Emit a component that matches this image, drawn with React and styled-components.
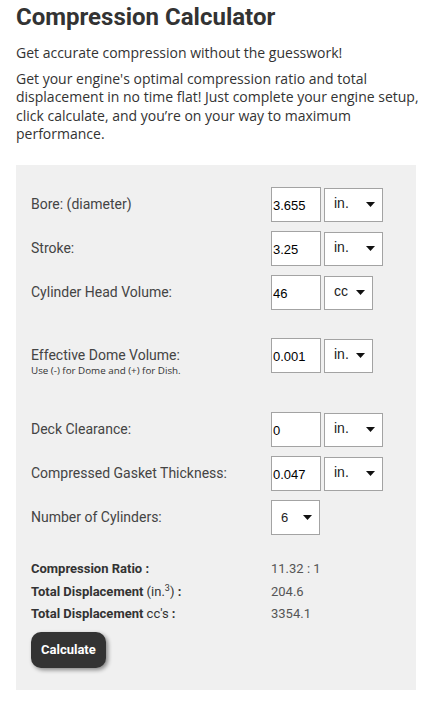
import React from "react";
import styled, { createGlobalStyle } from "styled-components";

const GlobalStyle = createGlobalStyle`
  body {
    margin: 0;
    background: #fff;
  }
`;

const Page = styled.div`
  padding: 1.5px 16px 13px;
`;

const Title = styled.h1`
  margin: 0;
  font-family: Roboto, "Liberation Sans", sans-serif;
  font-weight: 700;
  font-size: 24px;
  line-height: 30px;
  color: #333;
`;

const Intro = styled.p`
  margin: ${(p) => (p.$first ? "12px 0 8.5px" : "0")};
  font-family: "Open Sans", "DejaVu Sans", sans-serif;
  font-size: 14px;
  line-height: 18.2px;
  color: #333;
`;

const Panel = styled.div`
  width: 400px;
  box-sizing: border-box;
  margin-top: 21.7px;
  padding: 22px 15px 22.3px;
  background: #f0f0f0;
`;

const Row = styled.div`
  display: flex;
  align-items: center;
  height: 35px;
  margin-top: ${(p) => p.$gap}px;
`;

const LabelCol = styled.div`
  flex: 0 0 240px;
  display: flex;
  flex-direction: column;
`;

const Label = styled.label`
  font-family: Roboto, "Liberation Sans", sans-serif;
  font-size: 14px;
  line-height: 35px;
  color: #444;
`;

const Note = styled.span`
  margin: -7.5px 0 -4.5px;
  font-family: "Open Sans", "DejaVu Sans", sans-serif;
  font-size: 9.8px;
  line-height: 12px;
  color: #333;
`;

const Controls = styled.div`
  display: flex;
  align-items: flex-end;
  gap: 3px;
  height: 35px;
`;

const NumberInput = styled.input`
  width: 50px;
  height: 35px;
  box-sizing: border-box;
  margin: 0;
  padding: 2px 0 0 1px;
  border: 1px solid #a3a3a3;
  background: #fff;
  font-family: "Liberation Sans", Arial, sans-serif;
  font-size: 13px;
  color: #000;
  outline: none;
`;

const SelectBox = styled.div`
  width: ${(p) => p.$w}px;
  height: ${(p) => (p.$tall ? 35 : 34)}px;
  box-sizing: border-box;
  display: flex;
  align-items: center;
  justify-content: space-between;
  padding: 0 7px 0 9px;
  border: 1px solid #a3a3a3;
  background: #fff;
  font-family: "Liberation Sans", Arial, sans-serif;
  font-size: ${(p) => (p.$tall ? 13 : 14)}px;
  color: #222;
`;

const SelectText = styled.span`
  margin-bottom: ${(p) => (p.$tall ? 0 : 4)}px;
`;

const Results = styled.div`
  margin-top: 23.2px;
  font-family: Roboto, "Liberation Sans", sans-serif;
  font-size: 13px;
  line-height: 22.75px;
`;

const ResultRow = styled.div`
  display: flex;
`;

const ResultLabel = styled.div`
  flex: 0 0 240px;
  font-weight: 700;
  color: #333;
`;

const Light = styled.span`
  font-weight: 400;
`;

const Sup = styled.span`
  font-size: 9px;
  line-height: 0;
  vertical-align: 5px;
`;

const ResultValue = styled.div`
  color: #555;
`;

const CalcButton = styled.button`
  display: block;
  margin-top: 6px;
  height: 35.4px;
  padding: 0 10px;
  border: none;
  border-radius: 10px;
  background: #333;
  color: #fff;
  font-family: Roboto, "Liberation Sans", sans-serif;
  font-weight: 700;
  font-size: 13px;
  box-shadow: 2px 2px 4px rgba(0, 0, 0, 0.45);
  cursor: pointer;
`;

const Arrow = () => (
  <svg width="9" height="5" viewBox="0 0 9 5">
    <path d="M0 0 H9 L4.5 5 Z" fill="#111" />
  </svg>
);

const Select = ({ value, w, tall }) => (
  <SelectBox $w={w} $tall={tall}>
    <SelectText $tall={tall}>{value}</SelectText>
    <Arrow />
  </SelectBox>
);

const fields = [
  { label: "Bore: (diameter)", value: "3.655", unit: "in.", w: 59, gap: 0 },
  { label: "Stroke:", value: "3.25", unit: "in.", w: 59, gap: 9 },
  { label: "Cylinder Head Volume:", value: "46", unit: "cc", w: 49, gap: 9 },
  {
    label: "Effective Dome Volume:",
    note: "Use (-) for Dome and (+) for Dish.",
    value: "0.001",
    unit: "in.",
    w: 49,
    gap: 28,
  },
  { label: "Deck Clearance:", value: "0", unit: "in.", w: 59, gap: 39 },
  { label: "Compressed Gasket Thickness:", value: "0.047", unit: "in.", w: 59, gap: 9 },
];

const App = () => (
  <Page>
    <GlobalStyle />
    <Title>Compression Calculator</Title>
    <Intro $first>Get accurate compression without the guesswork!</Intro>
    <Intro>
      Get your engine's optimal compression ratio and total displacement in no
      time flat! Just complete your engine setup, click calculate, and you’re on
      your way to maximum performance.
    </Intro>
    <Panel>
      {fields.map((f) => (
        <Row key={f.label} $gap={f.gap}>
          <LabelCol>
            <Label>{f.label}</Label>
            {f.note && <Note>{f.note}</Note>}
          </LabelCol>
          <Controls>
            <NumberInput defaultValue={f.value} />
            <Select value={f.unit} w={f.w} />
          </Controls>
        </Row>
      ))}
      <Row $gap={9}>
        <LabelCol>
          <Label>Number of Cylinders:</Label>
        </LabelCol>
        <Controls>
          <Select value="6" w={49} tall />
        </Controls>
      </Row>
      <Results>
        <ResultRow>
          <ResultLabel>Compression Ratio :</ResultLabel>
          <ResultValue>11.32 : 1</ResultValue>
        </ResultRow>
        <ResultRow>
          <ResultLabel>
            Total Displacement <Light>(in.<Sup>3</Sup>)</Light> :
          </ResultLabel>
          <ResultValue>204.6</ResultValue>
        </ResultRow>
        <ResultRow>
          <ResultLabel>
            Total Displacement <Light>cc's</Light> :
          </ResultLabel>
          <ResultValue>3354.1</ResultValue>
        </ResultRow>
      </Results>
      <CalcButton>Calculate</CalcButton>
    </Panel>
  </Page>
);

export default App;
